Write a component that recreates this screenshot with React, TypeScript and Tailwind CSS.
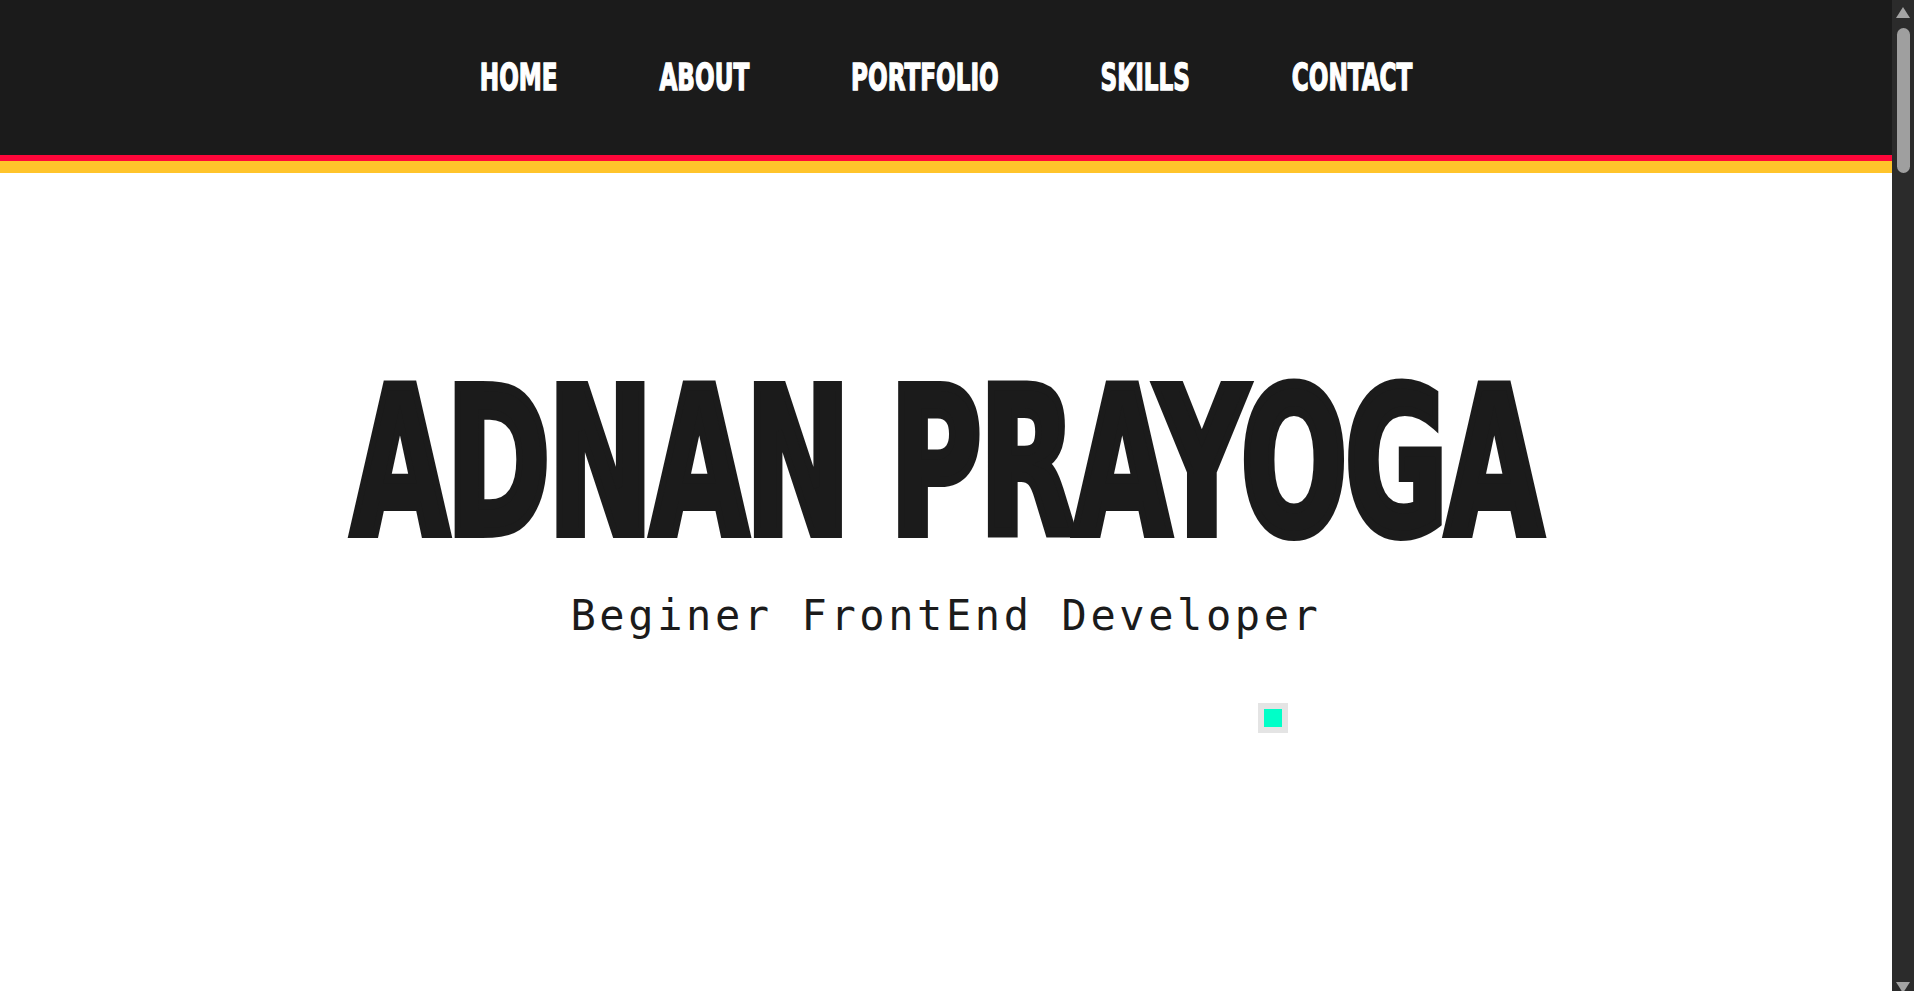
import React from "react";

const links = ["HOME", "ABOUT", "PORTFOLIO", "SKILLS", "CONTACT"];

export default function App() {
  return (
    <div className="flex h-screen overflow-hidden bg-white">
      <main className="flex-1 min-w-0 overflow-y-auto overflow-x-hidden [scrollbar-width:none]">
        {/* navbar */}
        <header>
          <nav className="h-[155px] bg-[#1b1b1b] flex items-center justify-center">
            <ul className="flex items-center gap-[163px] scale-x-[0.625] whitespace-nowrap">
              {links.map((l) => (
                <li key={l}>
                  <a
                    href={`#${l.toLowerCase()}`}
                    className="block text-white text-[37px] leading-none font-bold font-['DejaVu_Sans',sans-serif] [-webkit-text-stroke:1.5px_white]"
                  >
                    {l}
                  </a>
                </li>
              ))}
            </ul>
          </nav>
          <div className="h-[6px] bg-[#ff073a]" />
          <div className="h-[12px] bg-[#ffc42b]" />
        </header>

        {/* hero */}
        <section id="home" className="relative h-[818px] pt-[183px] text-center">
          <h1 className="-mx-[100px] whitespace-nowrap scale-x-[0.62] tracking-[-3.4px] text-[202px] leading-[215px] font-bold text-[#1b1b1b] font-['DejaVu_Sans',sans-serif] [-webkit-text-stroke:10px_#1b1b1b]">
            ADNAN PRAYOGA
          </h1>
          <p className="mt-[24px] text-[42px] leading-none tracking-[3.6px] text-[#1b1b1b] font-['DejaVu_Sans_Mono',monospace]">
            Beginer FrontEnd Developer
          </p>
          <div className="absolute left-[1258px] top-[530px] w-[30px] h-[30px] p-[6px] bg-[#e4e4e4]">
            <div className="w-full h-full bg-[#00ffc8]" />
          </div>
        </section>

        <section id="about" className="h-[1387px]" />
        <section id="portfolio" className="h-[1387px]" />
        <section id="skills" className="h-[1387px]" />
        <section id="contact" className="h-[1388px]" />
      </main>

      {/* scrollbar */}
      <aside className="w-[22px] shrink-0 bg-[#2b2b2b] flex flex-col items-center pt-[7px]">
        <div className="w-0 h-0 border-x-[7px] border-x-transparent border-b-[11px] border-b-[#a3a3a3]" />
        <div className="mt-[10px] w-[13px] h-[145px] rounded-full bg-[#9f9f9f]" />
        <div className="mt-auto mb-[-2px] w-0 h-0 border-x-[7px] border-x-transparent border-t-[11px] border-t-[#a3a3a3]" />
      </aside>
    </div>
  );
}
